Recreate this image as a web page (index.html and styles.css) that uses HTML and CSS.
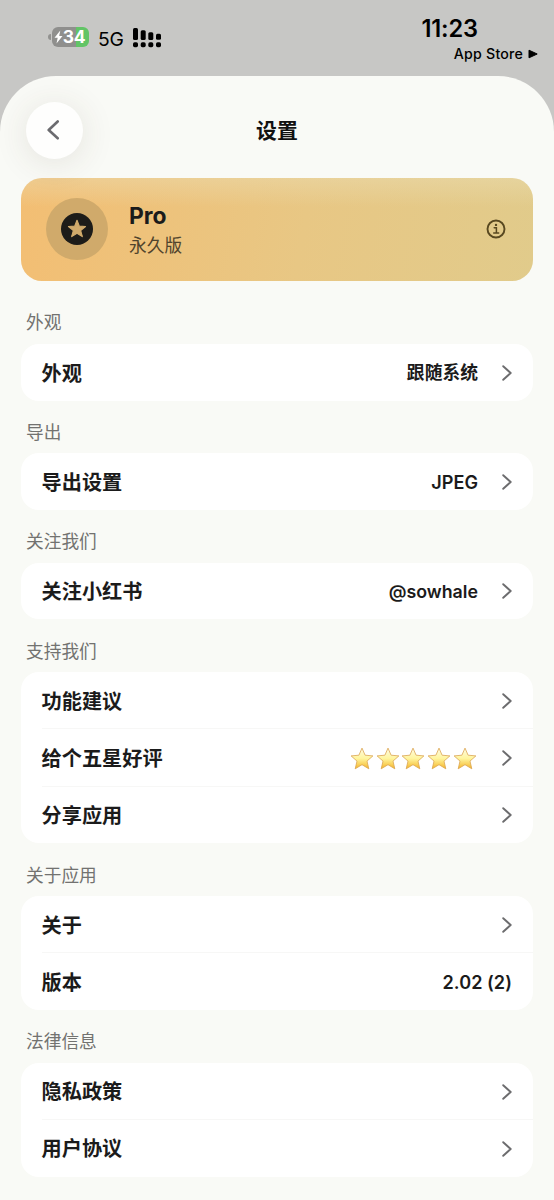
FILE: index.html
```html
<!DOCTYPE html>
<html lang="zh-CN">
<head>
<meta charset="utf-8">
<title>设置</title>
<link rel="stylesheet" href="styles.css">
</head>
<body>
<svg class="defs" width="0" height="0" aria-hidden="true">
  <defs>
    <linearGradient id="gold" x1="0" y1="0" x2="0" y2="1">
      <stop offset="0" stop-color="#fffbe6"/>
      <stop offset=".5" stop-color="#fff59d"/>
      <stop offset="1" stop-color="#f5b52a"/>
    </linearGradient>
    <symbol id="chevron" viewBox="0 0 10 16"><path d="M1.200 1.200 8.700 8l-7.500 6.800" fill="none" stroke="#6c6c6e" stroke-width="1.900" stroke-linecap="round" stroke-linejoin="round"/></symbol>
    <symbol id="star" viewBox="0 0 24 23"><path d="M12 1.100l3.100 7.100 7.800.7-5.900 5.200 1.800 7.700L12 17.700l-6.800 4.100 1.800-7.700L1.100 8.900l7.800-.7z" fill="url(#gold)" stroke="#dba450" stroke-width=".8" stroke-linejoin="round"/></symbol>
  </defs>
</svg>
<div class="phone">
  <div class="status">
    <div class="status-left">
      <div class="battery"><span class="battery-tip"></span><span class="battery-body"><svg class="bolt" width="9" height="14" viewBox="0 0 9 14"><path d="M6.300 .6.500 7.700h3.200L2.500 13.400l6-7.400H5.200z" fill="#fff"/></svg><span>34</span></span></div>
      <span class="network">5G</span>
      <svg class="signal" width="29" height="20" viewBox="0 0 29 20"><g fill="#000"><rect x="0" y="0" width="5" height="12" rx="1.500"/><rect x="7.700" y="2.200" width="5" height="9.800" rx="1.500"/><rect x="15.300" y="4.300" width="5" height="7.700" rx="1.500"/><rect x="23" y="5.700" width="5" height="6" rx="1.500"/><rect x="0" y="14.300" width="5" height="5" rx="1.700"/><rect x="7.700" y="14.300" width="5" height="5" rx="1.700"/><rect x="15.300" y="14.300" width="5" height="5" rx="1.700"/><rect x="23" y="14.300" width="5" height="5" rx="1.700"/></g></svg>
    </div>
    <div class="status-right">
      <div class="time">11:23</div>
      <div class="return"><span>App Store</span><svg width="10" height="10" viewBox="0 0 10 10"><path d="M1 1.200v7.600L9.200 5z" stroke="#000" stroke-linejoin="round"/></svg></div>
    </div>
  </div>
  <main class="sheet">
    <header class="header">
      <div class="back"><svg width="14" height="20" viewBox="0 0 14 20"><path d="M11.700 1.500 2.700 10l9 8.300" fill="none" stroke="#6b6b6f" stroke-width="2.600" stroke-linecap="round" stroke-linejoin="round"/></svg></div>
      <h1 class="title">设置</h1>
    </header>
    <div class="pro">
      <div class="medal"><svg width="32" height="32" viewBox="0 0 32 32"><circle cx="16" cy="16" r="16" fill="#1d1c19"/><path d="M16 7.300l2.300 5.900 6.200.3-4.900 4 1.700 6.100-5.300-3.400-5.300 3.400 1.700-6.100-4.900-4 6.200-.3z" fill="#d0aa6b" stroke="#d0aa6b" stroke-width="1.200" stroke-linejoin="round"/></svg></div>
      <div class="pro-text"><div class="pro-name">Pro</div><div class="pro-plan">永久版</div></div>
      <svg class="info" width="20" height="20" viewBox="0 0 20 20" fill="none" stroke="#584820"><circle cx="10" cy="10" r="8.500" stroke-width="1.900"/><path d="M8.200 8.700h2.200v5M7.700 13.900h5" stroke-width="1.500" stroke-linecap="round"/><circle cx="10" cy="5.900" r="1.200" fill="#584820" stroke="none"/></svg>
    </div>
    <h2 class="section">外观</h2>
    <div class="card">
      <div class="row"><span class="label">外观</span><span class="value">跟随系统</span><svg class="chev"><use href="#chevron"/></svg></div>
    </div>
    <h2 class="section">导出</h2>
    <div class="card">
      <div class="row"><span class="label">导出设置</span><span class="value latin">JPEG</span><svg class="chev"><use href="#chevron"/></svg></div>
    </div>
    <h2 class="section">关注我们</h2>
    <div class="card">
      <div class="row"><span class="label">关注小红书</span><span class="value">@sowhale</span><svg class="chev"><use href="#chevron"/></svg></div>
    </div>
    <h2 class="section">支持我们</h2>
    <div class="card">
      <div class="row"><span class="label">功能建议</span><svg class="chev"><use href="#chevron"/></svg></div>
      <div class="row"><span class="label">给个五星好评</span><span class="stars"><svg><use href="#star"/></svg><svg><use href="#star"/></svg><svg><use href="#star"/></svg><svg><use href="#star"/></svg><svg><use href="#star"/></svg></span><svg class="chev"><use href="#chevron"/></svg></div>
      <div class="row"><span class="label">分享应用</span><svg class="chev"><use href="#chevron"/></svg></div>
    </div>
    <h2 class="section">关于应用</h2>
    <div class="card">
      <div class="row"><span class="label">关于</span><svg class="chev"><use href="#chevron"/></svg></div>
      <div class="row"><span class="label">版本</span><span class="value latin">2.02 (2)</span></div>
    </div>
    <h2 class="section">法律信息</h2>
    <div class="card">
      <div class="row"><span class="label">隐私政策</span><svg class="chev"><use href="#chevron"/></svg></div>
      <div class="row"><span class="label">用户协议</span><svg class="chev"><use href="#chevron"/></svg></div>
    </div>
  </main>
</div>
</body>
</html>
```
FILE: styles.css
```css
* { box-sizing: border-box; }
body { margin: 0; background: #c7c7c5; font-family: Inter, "Noto Sans CJK SC", sans-serif; color: #1b1b1b; }
h1, h2 { margin: 0; }
.defs { position: absolute; }
.phone { width: 554px; height: 1200px; overflow: hidden; display: flex; flex-direction: column; }
.status { height: 76px; flex: none; display: flex; justify-content: space-between; color: #000; }
.status-left { display: flex; align-items: flex-start; padding: 27px 0 0 48px; }
.battery { display: flex; align-items: center; gap: 1px; }
.battery-tip { width: 3px; height: 6px; border-radius: 3px 0 0 3px; background: #929290; }
.battery-body { width: 37px; height: 20px; border-radius: 6px; background: linear-gradient(90deg, #8f8f8d 65%, #62c466 65%); display: flex; align-items: center; justify-content: center; color: #fff; font-size: 17.500px; font-weight: 700; line-height: 20px; letter-spacing: -.4px; }
.bolt { margin-left: -2px; }
.network { margin-left: 9px; font-size: 19.300px; line-height: 24px; letter-spacing: -.2px; }
.signal { margin: .5px 0 0 9px; }
.status-right { padding: 14px 16px 0 0; width: 150px; }
.time { font-size: 23.600px; line-height: 29px; font-weight: 600; padding-left: 17.500px; letter-spacing: -.2px; }
.return { display: flex; justify-content: flex-end; align-items: center; gap: 5px; font-size: 14.200px; line-height: 21px; font-weight: 500; letter-spacing: .2px; white-space: nowrap; }
.sheet { flex: 1; border-radius: 56px 56px 0 0; background: #f9faf6; padding: 0 21px; }
.header { height: 102px; display: grid; grid-template-columns: 62px 1fr 62px; align-items: center; padding-top: 6px; }
.back { width: 57px; height: 57px; margin-left: 5px; border-radius: 50%; background: #fefefd; display: flex; align-items: center; justify-content: center; box-shadow: 0 4px 34px rgba(70, 60, 45, .12); }
.back svg { margin-right: 3px; }
.title { text-align: center; font-size: 20.900px; line-height: 30px; padding-top: 2px; font-weight: 600; color: #111; }
.pro { height: 102.500px; border-radius: 21px; background: linear-gradient(180deg, rgba(235, 222, 180, .45), rgba(235, 222, 180, 0) 28%), linear-gradient(100deg, #f3be73, #e8c784 55%, #e1cb8b); display: flex; align-items: center; padding: 0 27px 0 25px; }
.medal { width: 62px; height: 62px; border-radius: 50%; background: #d0aa6b; display: flex; align-items: center; justify-content: center; }
.pro-text { margin-left: 21px; padding-top: 3px; flex: 1; }
.pro-name { font-size: 22.800px; line-height: 29px; font-weight: 700; }
.pro-plan { font-size: 17.700px; line-height: 31px; color: #51442d; }
.section { height: 52.660px; padding: 18.500px 0 0 5px; font-size: 17.700px; line-height: 28px; font-weight: 400; color: #727270; }
.pro + .section { height: 63.500px; padding-top: 28.800px; }
.card { border-radius: 18px; background: #fff; }
.row { height: 57.330px; display: flex; align-items: center; padding: 1px 21px 0 20.500px; background: linear-gradient(#f7f7f6, #f7f7f6) 21px 100% / 491px 1px no-repeat; }
.row:last-child { height: 56.670px; background: none; }
.label { flex: 1; font-size: 20.200px; line-height: 30px; padding-top: 1.500px; font-weight: 600; }
.value { font-size: 17.800px; line-height: 26px; padding-top: 1px; font-weight: 600; }
.latin { font-size: 18.100px; padding-top: 0; letter-spacing: .05px; }
.chev { width: 10px; height: 16px; margin-left: 24px; }
.stars { display: flex; gap: 1.800px; margin-right: 1px; }
.stars svg { width: 24px; height: 23px; }
```
